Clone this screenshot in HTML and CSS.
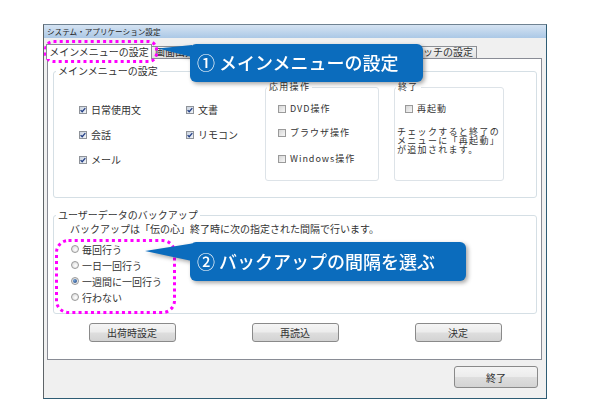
FILE: index.html
```html
<!DOCTYPE html>
<html lang="ja">
<head>
<meta charset="utf-8">
<title>システム・アプリケーション設定</title>
<link rel="stylesheet" href="styles.css">
</head>
<body>
<div class="window">
  <div class="titlebar">システム・アプリケーション設定</div>
  <div class="client">
    <div class="tabs">
      <div class="tab sel">メインメニューの設定</div>
      <div class="tab">画面出力設定</div>
      <div class="tab">音声読上げ設定</div>
      <div class="tab">文字盤の設定</div>
      <div class="tab">外部機</div>
      <div class="tab">スイッチの設定</div>
    </div>
    <div class="panel">
      <fieldset class="group">
        <legend>メインメニューの設定</legend>
        <div class="g1body">
          <div class="checks">
            <div class="chk"><span class="box"><svg viewBox="0 0 8 8" width="8" height="8"><path d="M1.6 4.1 L3.2 5.7 L6.3 2.1" fill="none" stroke="#233f86" stroke-width="1.3"/></svg></span>日常使用文</div>
            <div class="chk"><span class="box"><svg viewBox="0 0 8 8" width="8" height="8"><path d="M1.6 4.1 L3.2 5.7 L6.3 2.1" fill="none" stroke="#233f86" stroke-width="1.3"/></svg></span>文書</div>
            <div class="chk"><span class="box"><svg viewBox="0 0 8 8" width="8" height="8"><path d="M1.6 4.1 L3.2 5.7 L6.3 2.1" fill="none" stroke="#233f86" stroke-width="1.3"/></svg></span>会話</div>
            <div class="chk"><span class="box"><svg viewBox="0 0 8 8" width="8" height="8"><path d="M1.6 4.1 L3.2 5.7 L6.3 2.1" fill="none" stroke="#233f86" stroke-width="1.3"/></svg></span>リモコン</div>
            <div class="chk"><span class="box"><svg viewBox="0 0 8 8" width="8" height="8"><path d="M1.6 4.1 L3.2 5.7 L6.3 2.1" fill="none" stroke="#233f86" stroke-width="1.3"/></svg></span>メール</div>
          </div>
          <fieldset class="sub sub1">
            <legend>応用操作</legend>
            <div class="subbody">
              <div class="chk mono"><span class="box off"></span>DVD操作</div>
              <div class="chk mono"><span class="box off"></span>ブラウザ操作</div>
              <div class="chk mono"><span class="box off"></span>Windows操作</div>
            </div>
          </fieldset>
          <fieldset class="sub sub2">
            <legend>終了</legend>
            <div class="subbody2">
              <div class="chk mono restart"><span class="box off"></span>再起動</div>
              <div class="note">チェックすると終了の<br>メニューに「再起動」<br>が追加されます。</div>
            </div>
          </fieldset>
        </div>
      </fieldset>
      <fieldset class="group g2">
        <legend>ユーザーデータのバックアップ</legend>
        <div class="g2body">
          <div class="desc">バックアップは「伝の心」終了時に次の指定された間隔で行います。</div>
          <div class="radios">
            <div class="rad"><span class="circle"></span>毎回行う</div>
            <div class="rad"><span class="circle"></span>一日一回行う</div>
            <div class="rad"><span class="circle on"></span>一週間に一回行う</div>
            <div class="rad"><span class="circle"></span>行わない</div>
          </div>
        </div>
      </fieldset>
      <div class="btnrow">
        <div class="btn">出荷時設定</div>
        <div class="btn">再読込</div>
        <div class="btn">決定</div>
      </div>
    </div>
    <div class="footer"><div class="btn end">終了</div></div>
  </div>
</div>

<svg class="marks" width="600" height="420" viewBox="0 0 600 420">
  <rect x="45.5" y="41.5" width="111" height="20" rx="8" fill="none" stroke="#ff00ff" stroke-width="3" stroke-dasharray="3 3.2"/>
  <rect x="56.5" y="240.5" width="118" height="72" rx="12" fill="none" stroke="#ff00ff" stroke-width="3" stroke-dasharray="3 3.2"/>
</svg>

<div class="callout c1">① メインメニューの設定</div>
<div class="callout c2">② バックアップの間隔を選ぶ</div>
</body>
</html>
```

FILE: styles.css
```css
* { box-sizing: border-box; }
html, body { margin: 0; padding: 0; background: #ffffff; }
body {
  width: 600px;
  height: 420px;
  position: relative;
  overflow: hidden;
  font-family: "Noto Sans CJK JP", "Noto Sans", sans-serif;
  font-size: 10px;
  color: #333333;
}

.window {
  margin: 24px 0 0 43px;
  width: 504px;
  height: 375px;
  border: 1px solid #2e5c74;
  border-left-color: #5e6468;
  border-top-color: #6f8292;
  background: #f0f0f0;
}

.titlebar {
  height: 13px;
  background: linear-gradient(#d5e3f2, #abc8e6);
  font-size: 7.6px;
  line-height: 13px;
  padding-left: 3px;
  color: #222;
  white-space: nowrap;
}

.client { padding: 0 4px 0 3px; }

.tabs {
  display: flex;
  align-items: flex-end;
  height: 14px;
  margin-top: 6px;
}
.tab {
  height: 12px;
  border: 1px solid #8d9096;
  border-bottom: none;
  margin-left: -1px;
  padding: 0 3px;
  background: linear-gradient(#f4f4f4, #e1e1e1);
  font-size: 10px;
  line-height: 10px;
  white-space: nowrap;
  color: #333;
}
.tab.sel {
  width: 106px;
  height: 15px;
  margin-left: -1px;
  margin-bottom: -1px;
  background: #ffffff;
  position: relative;
  z-index: 1;
  line-height: 13px;
  text-align: center;
  padding: 0;
}

.panel {
  height: 302px;
  border: 1px solid #898c95;
  background: #ffffff;
  padding: 6px 4px 0 5px;
}

fieldset {
  margin: 0;
  padding: 0;
  min-width: 0;
}
.group {
  border: 1px solid #d5dfe5;
  border-radius: 3px;
}
.group > legend {
  padding: 0 2px;
  margin-left: 2px;
  font-size: 10px;
  line-height: 12px;
  color: #333;
}

.g1body {
  display: flex;
  align-items: flex-start;
  height: 120px;
  padding-left: 25px;
}
.checks {
  display: grid;
  grid-template-columns: 107px 79px;
  grid-auto-rows: 25px;
  padding-top: 20px;
}
.chk {
  display: flex;
  align-items: center;
  gap: 4px;
  white-space: nowrap;
  height: 12px;
  line-height: 12px;
}
.checks .chk { height: 25px; }
.box {
  display: block;
  flex: none;
  width: 8px;
  height: 8px;
  border: 1px solid #8f9399;
  background: linear-gradient(135deg, #c9d2de, #f2f4f7);
  position: relative;
}
.box svg { position: absolute; left: -1px; top: -1px; }
.box.off { background: linear-gradient(135deg, #d6d6d6, #f7f7f7); border-color: #9a9a9a; }

.sub {
  margin-top: 5px;
  border: 1px solid #dde3e8;
  border-radius: 3px;
}
.sub > legend {
  padding: 0 2px;
  margin-left: 1px;
  font-size: 9px;
  line-height: 10px;
  letter-spacing: 1.3px;
  color: #333;
}
.sub1 { width: 114px; }
.sub2 { width: 110px; margin-left: 15px; }
.subbody {
  height: 88px;
  padding: 11px 0 0 12px;
  display: flex;
  flex-direction: column;
  gap: 12px;
}
.subbody .chk:last-child { margin-top: 2px; }
.mono { font-size: 9px; letter-spacing: 1px; gap: 4px; }
.subbody2 {
  height: 88px;
  padding-top: 11px;
}
.restart { padding-left: 10px; }
.note {
  margin-top: 12px;
  padding-left: 2px;
  font-size: 9px;
  line-height: 9px;
  letter-spacing: 1.3px;
  white-space: nowrap;
  color: #333;
}

.g2 { margin-top: 11px; }
.g2body { padding: 2px 0 8px 0; }
.desc {
  padding-left: 16px;
  line-height: 12px;
  white-space: nowrap;
}
.radios {
  margin-top: 6px;
  padding-left: 17px;
}
.rad {
  display: flex;
  align-items: center;
  gap: 3px;
  height: 16px;
  white-space: nowrap;
}
.circle {
  display: block;
  flex: none;
  width: 8px;
  height: 8px;
  border-radius: 50%;
  border: 1px solid #9a9a9a;
  background: radial-gradient(circle at 60% 60%, #ffffff, #d4d4d4);
  position: relative;
}
.circle.on::after {
  content: "";
  position: absolute;
  left: 1px;
  top: 1px;
  width: 4px;
  height: 4px;
  border-radius: 50%;
  background: radial-gradient(circle at 35% 35%, #6f9fd8, #1d3f72);
}

.btnrow {
  display: flex;
  justify-content: center;
  gap: 76px;
  margin-top: 9px;
}
.btn {
  width: 87px;
  height: 19px;
  border: 1px solid #8a8a8a;
  border-radius: 3px;
  background: linear-gradient(#f5f5f5 0%, #ececec 48%, #dedede 52%, #d3d3d3 100%);
  display: flex;
  align-items: center;
  justify-content: center;
  font-size: 10px;
  color: #333;
}
.footer {
  display: flex;
  justify-content: flex-end;
  margin-top: 6px;
  padding-right: 4px;
}
.btn.end { width: 84px; height: 22px; }

.marks {
  position: absolute;
  left: 0;
  top: 0;
  pointer-events: none;
}

.callout {
  position: absolute;
  left: 190px;
  background: #0b6cbd;
  color: #ffffff;
  border-radius: 6px;
  font-size: 18px;
  font-weight: 500;
  padding-left: 7px;
  white-space: nowrap;
  filter: drop-shadow(2px 2px 2px rgba(0, 0, 0, 0.35));
}
.callout::before {
  content: "";
  position: absolute;
  top: 0;
  background: #0b6cbd;
}
.c1 { top: 44px; width: 233px; height: 38px; line-height: 37px; }
.c1::before {
  left: -32px;
  width: 34px;
  height: 15px;
  clip-path: polygon(0 4.5px, 100% 1px, 100% 13px);
}
.c2 { top: 242px; width: 276px; height: 39px; line-height: 39px; }
.c2::before {
  left: -45px;
  width: 47px;
  height: 20px;
  clip-path: polygon(0 9px, 100% 1.5px, 100% 19px);
}
```
